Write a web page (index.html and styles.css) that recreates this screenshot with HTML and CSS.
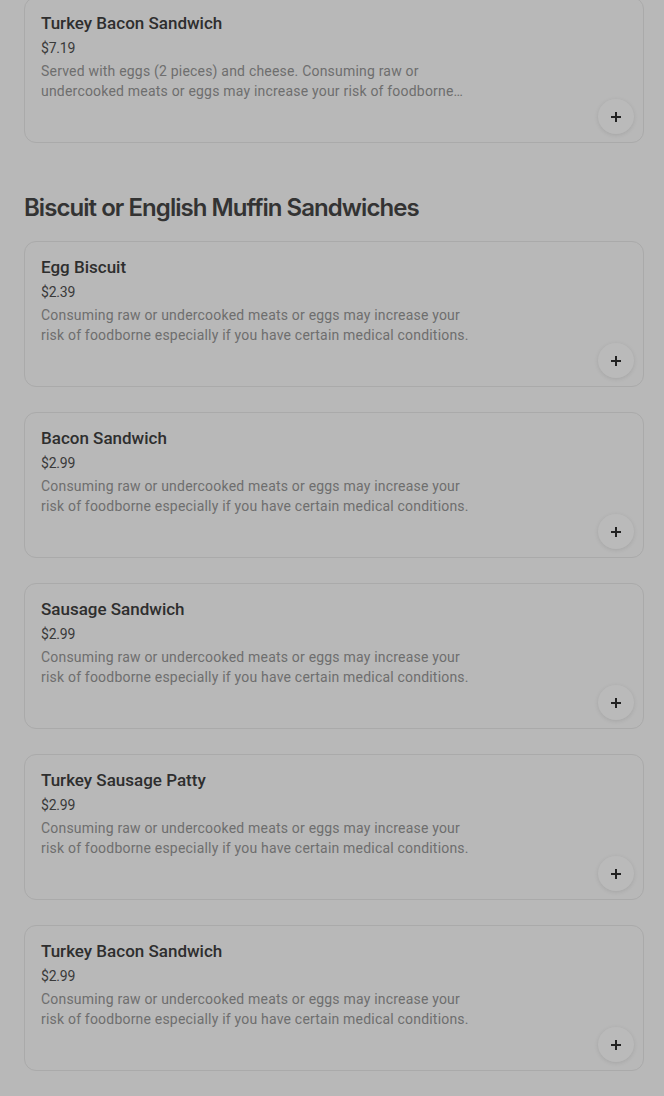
FILE: index.html
```html
<!DOCTYPE html>
<html>
<head>
<meta charset="utf-8">
<link rel="stylesheet" href="styles.css">
</head>
<body>
<main class="menu">
  <section class="section first">
    <div class="list">
      <article class="card">
        <h3 class="title">Turkey Bacon Sandwich</h3>
        <div class="price">$7.19</div>
        <p class="desc">Served with eggs (2 pieces) and cheese. Consuming raw or undercooked meats or eggs may increase your risk of foodborne illness, especially if you have certain medical conditions.</p>
        <button class="add" aria-label="Add"><svg viewBox="0 0 12 12" width="12" height="12"><path d="M6 1v10M1 6h10" stroke="currentColor" stroke-width="2" fill="none"/></svg></button>
      </article>
    </div>
  </section>

  <section class="section">
    <h2 class="heading">Biscuit or English Muffin Sandwiches</h2>
    <div class="list">
      <article class="card">
        <h3 class="title">Egg Biscuit</h3>
        <div class="price">$2.39</div>
        <p class="desc">Consuming raw or undercooked meats or eggs may increase your risk of foodborne especially if you have certain medical conditions.</p>
        <button class="add" aria-label="Add"><svg viewBox="0 0 12 12" width="12" height="12"><path d="M6 1v10M1 6h10" stroke="currentColor" stroke-width="2" fill="none"/></svg></button>
      </article>
      <article class="card">
        <h3 class="title">Bacon Sandwich</h3>
        <div class="price">$2.99</div>
        <p class="desc">Consuming raw or undercooked meats or eggs may increase your risk of foodborne especially if you have certain medical conditions.</p>
        <button class="add" aria-label="Add"><svg viewBox="0 0 12 12" width="12" height="12"><path d="M6 1v10M1 6h10" stroke="currentColor" stroke-width="2" fill="none"/></svg></button>
      </article>
      <article class="card">
        <h3 class="title">Sausage Sandwich</h3>
        <div class="price">$2.99</div>
        <p class="desc">Consuming raw or undercooked meats or eggs may increase your risk of foodborne especially if you have certain medical conditions.</p>
        <button class="add" aria-label="Add"><svg viewBox="0 0 12 12" width="12" height="12"><path d="M6 1v10M1 6h10" stroke="currentColor" stroke-width="2" fill="none"/></svg></button>
      </article>
      <article class="card">
        <h3 class="title">Turkey Sausage Patty</h3>
        <div class="price">$2.99</div>
        <p class="desc">Consuming raw or undercooked meats or eggs may increase your risk of foodborne especially if you have certain medical conditions.</p>
        <button class="add" aria-label="Add"><svg viewBox="0 0 12 12" width="12" height="12"><path d="M6 1v10M1 6h10" stroke="currentColor" stroke-width="2" fill="none"/></svg></button>
      </article>
      <article class="card">
        <h3 class="title">Turkey Bacon Sandwich</h3>
        <div class="price">$2.99</div>
        <p class="desc">Consuming raw or undercooked meats or eggs may increase your risk of foodborne especially if you have certain medical conditions.</p>
        <button class="add" aria-label="Add"><svg viewBox="0 0 12 12" width="12" height="12"><path d="M6 1v10M1 6h10" stroke="currentColor" stroke-width="2" fill="none"/></svg></button>
      </article>
      <article class="card">
        <h3 class="title">Sausage Biscuit</h3>
        <div class="price">$2.99</div>
        <p class="desc">Consuming raw or undercooked meats or eggs may increase your risk of foodborne especially if you have certain medical conditions.</p>
        <button class="add" aria-label="Add"><svg viewBox="0 0 12 12" width="12" height="12"><path d="M6 1v10M1 6h10" stroke="currentColor" stroke-width="2" fill="none"/></svg></button>
      </article>
    </div>
  </section>
</main>
</body>
</html>
```

FILE: styles.css
```css
html, body {
  margin: 0;
  padding: 0;
  background: #b8b8b8;
  height: 1096px;
  overflow: hidden;
}

.menu {
  padding: 0 20px 0 24px;
  margin-top: -3px;
  font-family: Roboto, "Liberation Sans", sans-serif;
}

.section {
  display: flex;
  flex-direction: column;
}

.section.first {
  margin-bottom: 49px;
}

.heading {
  margin: 0 0 17px 0;
  font-family: Inter, "Liberation Sans", sans-serif;
  font-weight: 600;
  font-size: 24px;
  line-height: 32px;
  letter-spacing: -0.95px;
  color: #333333;
}

.list {
  display: flex;
  flex-direction: column;
  gap: 25px;
}

.card {
  display: flex;
  flex-direction: column;
  border: 1px solid #aaaaaa;
  border-radius: 12px;
  padding: 15px 8px 8px 16px;
  height: 146px;
  box-sizing: border-box;
}

.title {
  margin: 0;
  font-size: 17px;
  font-weight: 500;
  line-height: 20px;
  color: #2e2e2e;
}

.price {
  margin-top: 5px;
  font-size: 14px;
  line-height: 20px;
  letter-spacing: -0.2px;
  color: #3a3a3a;
}

.desc {
  margin: 3px 0 0 0;
  max-width: 440px;
  font-size: 14px;
  line-height: 20px;
  letter-spacing: 0.2px;
  color: #6e6e6e;
  display: -webkit-box;
  -webkit-line-clamp: 2;
  -webkit-box-orient: vertical;
  overflow: hidden;
}

.add {
  align-self: flex-end;
  margin-top: auto;
  margin-right: 1px;
  width: 36px;
  height: 36px;
  border-radius: 50%;
  border: none;
  background: #bababa;
  box-shadow: 0 1px 4px rgba(0, 0, 0, 0.1);
  color: #222222;
  display: flex;
  align-items: center;
  justify-content: center;
  padding: 0;
}
```
